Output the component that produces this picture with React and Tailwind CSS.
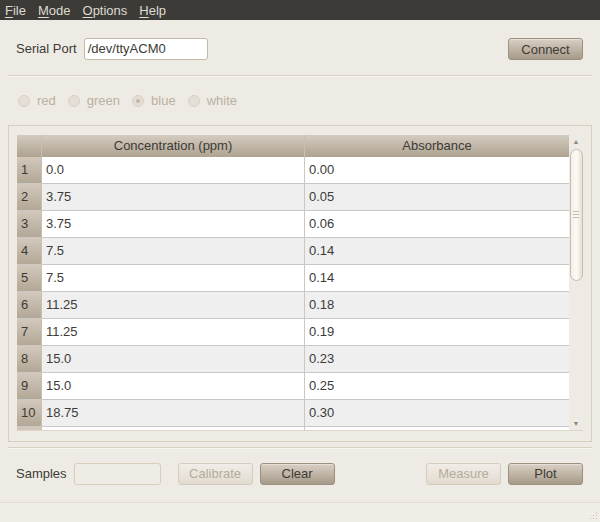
import React from 'react'

const rows = [
  ['0.0', '0.00'],
  ['3.75', '0.05'],
  ['3.75', '0.06'],
  ['7.5', '0.14'],
  ['7.5', '0.14'],
  ['11.25', '0.18'],
  ['11.25', '0.19'],
  ['15.0', '0.23'],
  ['15.0', '0.25'],
  ['18.75', '0.30'],
  ['', ''],
]

const menus = [
  ['F', 'ile'],
  ['M', 'ode'],
  ['O', 'ptions'],
  ['H', 'elp'],
]

function Button({ children, disabled, className = '' }) {
  return (
    <button
      className={`h-[22px] w-[75px] rounded-[3px] border text-[13px] leading-none ${
        disabled
          ? 'border-[#d6ccbd] bg-gradient-to-b from-[#f1ede7] to-[#e2dbd0] text-[#b6ab9b]'
          : 'border-[#9c9080] bg-gradient-to-b from-[#d9d0c4] to-[#a69a89] text-[#3c3b37] shadow-[inset_0_1px_0_rgba(255,255,255,0.35)]'
      } ${className}`}
    >
      {children}
    </button>
  )
}

function Radio({ label, checked }) {
  return (
    <div className="flex items-center gap-[7px]">
      <span className="flex h-[12px] w-[12px] items-center justify-center rounded-full border border-[#d8cfc2] bg-[#e4ded5]">
        {checked && <span className="h-[4px] w-[4px] rounded-full bg-[#c2b8a8]" />}
      </span>
      <span className="text-[13px] text-[#bbb0a0]">{label}</span>
    </div>
  )
}

export default function App() {
  return (
    <div className="flex h-[522px] w-[600px] flex-col bg-[#eeebe4] font-['Liberation_Sans',sans-serif] text-[13px] text-[#3c3b37]">
      <div className="flex h-[20px] items-center gap-[12px] bg-[#3c3b37] pl-[5px] text-[#dfdbd2]">
        {menus.map(([k, rest]) => (
          <span key={k} className="leading-none">
            <span className="underline underline-offset-2">{k}</span>
            {rest}
          </span>
        ))}
      </div>

      <div className="flex items-center justify-between px-[16px] pr-[17px] pt-[18px]">
        <div className="flex items-center gap-[7px]">
          <span>Serial Port</span>
          <div className="flex h-[22px] w-[124px] items-center rounded-[3px] border border-[#c4b8a6] bg-white px-[3px]">
            /dev/ttyACM0
          </div>
        </div>
        <Button>Connect</Button>
      </div>

      <div className="mx-[8px] mt-[15px] h-[2px] border-t border-[#d8d0c3] bg-[#f7f5f1]" />

      <div className="flex items-center gap-[12px] pl-[18px] pt-[14px]">
        <Radio label="red" />
        <Radio label="green" />
        <Radio label="blue" checked />
        <Radio label="white" />
      </div>

      <div className="mx-[8px] mt-[14px] flex h-[317px] border border-[#d9cfbf] pb-[10px] pl-[8px] pr-[8px] pt-[9px]">
        <div className="flex flex-1 overflow-hidden border-b border-[#ddd5c8]">
          <div className="flex flex-1 flex-col overflow-hidden">
            <div className="flex h-[22px] shrink-0">
              <div className="w-[25px] border-r border-[#c9bfb0] bg-gradient-to-b from-[#d4ccc0] to-[#aea290]" />
              <div className="flex w-[263px] items-center justify-center border-r border-[#c9bfb0] bg-gradient-to-b from-[#d4ccc0] to-[#aea290]">
                Concentration (ppm)
              </div>
              <div className="flex flex-1 items-center justify-center bg-gradient-to-b from-[#d4ccc0] to-[#aea290]">
                Absorbance
              </div>
            </div>
            {rows.map(([c, a], i) => (
              <div
                key={i}
                className={`flex h-[27px] shrink-0 border-b border-[#cbc8c3] ${i % 2 ? 'bg-[#efefef]' : 'bg-white'}`}
              >
                <div className="flex w-[25px] items-center border-r border-[#c9bfb0] bg-gradient-to-b from-[#d2c9bc] to-[#b3a796] pl-[4px] text-[#3c3b37]">
                  {i < 10 ? i + 1 : ''}
                </div>
                <div className="flex w-[263px] items-center border-r border-[#cbc8c3] pl-[4px]">{c}</div>
                <div className="flex flex-1 items-center pl-[4px]">{a}</div>
              </div>
            ))}
          </div>
          <div className="relative flex w-[14px] flex-col items-center bg-[#eeebe4]">
            <span className="mt-[3px] text-[7px] leading-none text-[#8f877b]">▲</span>
            <div className="mt-[4px] flex h-[132px] w-[13px] items-center justify-center rounded-full border border-[#c8bdac] bg-gradient-to-r from-[#f3efe8] via-[#fbfaf7] to-[#e7e0d4]">
              <div className="flex flex-col gap-[2px]">
                <span className="h-px w-[6px] bg-[#c6bcad]" />
                <span className="h-px w-[6px] bg-[#c6bcad]" />
                <span className="h-px w-[6px] bg-[#c6bcad]" />
              </div>
            </div>
            <div className="flex-1" />
            <span className="mb-[3px] text-[7px] leading-none text-[#8f877b]">▼</span>
          </div>
        </div>
      </div>

      <div className="mx-[8px] mt-[5px] h-[2px] border-t border-[#d8d0c3] bg-[#f7f5f1]" />

      <div className="flex items-center pl-[16px] pr-[17px] pt-[14px]">
        <span>Samples</span>
        <div className="ml-[7px] h-[22px] w-[87px] rounded-[3px] border border-[#d8cdbc] bg-[#efebe5]" />
        <Button disabled className="ml-[17px]">Calibrate</Button>
        <Button className="ml-[7px]">Clear</Button>
        <div className="flex-1" />
        <Button disabled>Measure</Button>
        <Button className="ml-[7px]">Plot</Button>
      </div>

      <div className="mt-[17px] h-px bg-[#e3ddd2]" />
      <div className="flex flex-1 items-end justify-end bg-[#f0ece6] p-[2px]">
        <svg width="10" height="10" viewBox="0 0 10 10">
          {[[8, 2], [8, 5], [5, 5], [8, 8], [5, 8], [2, 8]].map(([x, y]) => (
            <rect key={`${x}-${y}`} x={x} y={y} width="1" height="1" fill="#c8c0b4" />
          ))}
        </svg>
      </div>
    </div>
  )
}
